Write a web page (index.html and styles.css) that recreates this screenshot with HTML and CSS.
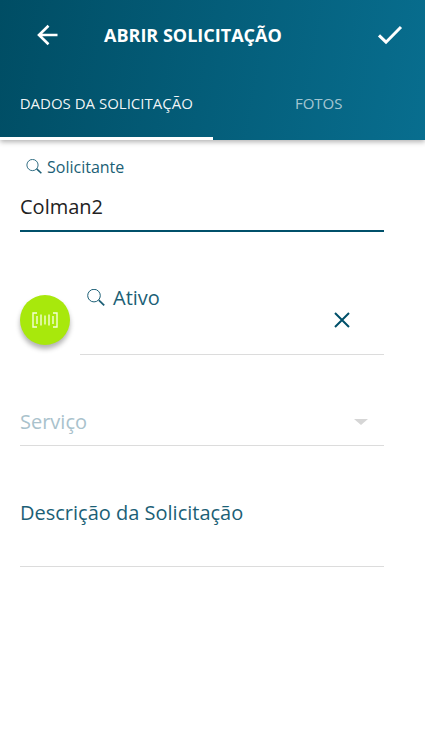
FILE: index.html
```html
<!DOCTYPE html>
<html lang="pt-BR">
<head>
<meta charset="utf-8">
<meta name="viewport" content="width=device-width, initial-scale=1">
<title>Abrir Solicitação</title>
<link rel="stylesheet" href="styles.css">
</head>
<body>
<header class="header">
  <div class="toolbar">
    <button class="icon-button" type="button" aria-label="Voltar">
      <svg width="22" height="22" viewBox="0 0 22 22" fill="none" stroke="currentColor" stroke-width="2.6"><path d="M21.5 11H3M12.5 1.8L3 11l9.5 9.2"/></svg>
    </button>
    <h1 class="title">ABRIR SOLICITAÇÃO</h1>
    <button class="icon-button" type="button" aria-label="Salvar">
      <svg width="26" height="20" viewBox="0 0 26 20" fill="none" stroke="currentColor" stroke-width="3"><path d="M2 10.4l7 6.8L24 2"/></svg>
    </button>
  </div>
  <nav class="tabs">
    <a class="tab tab-active" href="#dados">DADOS DA SOLICITAÇÃO</a>
    <a class="tab" href="#fotos">FOTOS</a>
  </nav>
</header>
<main id="dados">
  <form class="form">
    <div class="field field-focused">
      <label class="label label-small" for="solicitante">
        <svg width="16" height="16" viewBox="0 0 18 18" fill="none" stroke="currentColor"><circle cx="7.3" cy="6.8" r="6.3"/><path d="M12 11.2l5.3 4.8" stroke-width="1.8"/></svg>
        Solicitante
      </label>
      <input class="input" id="solicitante" type="text" value="Colman2">
    </div>
    <div class="asset-row">
      <button class="scan-button" type="button" aria-label="Ler código de barras">
        <svg width="26" height="16" viewBox="0 0 26 16" fill="none" stroke="currentColor" stroke-width="1.4"><path d="M5 1H1v14h4M21 1h4v14h-4M5 4v8M9 2.5v11M13 3.5v9M17 2.5v11M21 4v8"/></svg>
      </button>
      <div class="field asset-field">
        <label class="label asset-label" for="ativo">
          <svg width="18" height="18" viewBox="0 0 18 18" fill="none" stroke="currentColor"><circle cx="7" cy="6.6" r="6.3"/><path d="M11.8 11.2l5.4 5.2" stroke-width="1.8"/></svg>
          Ativo
        </label>
        <div class="asset-entry">
          <input class="input" id="ativo" type="text">
          <button class="clear-button" type="button" aria-label="Limpar">
            <svg width="16" height="16" viewBox="0 0 16 16" fill="none" stroke="currentColor" stroke-width="2"><path d="M1 1l14 14M15 1L1 15"/></svg>
          </button>
        </div>
      </div>
    </div>
    <div class="field service-field">
      <select class="input select" id="servico" aria-label="Serviço" disabled>
        <option>Serviço</option>
      </select>
      <svg class="caret" width="14" height="6" viewBox="0 0 14 6"><path d="M0 0h14L7 6z" fill="currentColor"/></svg>
    </div>
    <div class="field description-field">
      <label class="label" for="descricao">Descrição da Solicitação</label>
      <input class="input" id="descricao" type="text">
    </div>
  </form>
</main>
</body>
</html>
```
FILE: styles.css
```css
* {
  box-sizing: border-box;
}

body {
  margin: 0;
  background: #fff;
  color: #00506a;
  font-family: "Open Sans", "Noto Sans", sans-serif;
}

button,
input,
select {
  margin: 0;
  padding: 0;
  border: 0;
  background: none;
  color: inherit;
  font: inherit;
  outline: 0;
}

svg {
  display: block;
  flex: none;
}

.header {
  background: linear-gradient(100deg, #004d64, #086e8f);
  box-shadow: 0 2px 5px rgba(0, 0, 0, 0.3);
  color: #fff;
}

.toolbar {
  display: flex;
  align-items: center;
  height: 70px;
  padding: 0 10px 0 22px;
}

.icon-button {
  display: grid;
  place-items: center;
  width: 50px;
  height: 50px;
}

.title {
  flex: 1;
  margin: 0;
  padding-left: 32px;
  font-size: 18px;
  font-weight: 700;
  line-height: 24px;
  white-space: nowrap;
}

.tabs {
  display: grid;
  grid-template-columns: 1fr 1fr;
}

.tab {
  height: 70px;
  border-bottom: 3px solid transparent;
  color: rgba(255, 255, 255, 0.65);
  font-size: 15px;
  line-height: 67px;
  text-align: center;
  text-decoration: none;
  white-space: nowrap;
}

.tab-active {
  border-color: #fff;
  color: rgba(255, 255, 255, 0.95);
}

.form {
  padding: 16px 41px 0 20px;
}

.field {
  border-bottom: 1px solid #dcdcdc;
}

.field-focused {
  border-bottom: 2px solid #00506a;
}

.label {
  display: flex;
  align-items: center;
  gap: 8px;
  color: #1c5f76;
  font-size: 20px;
  line-height: 28px;
}

.label-small {
  gap: 5px;
  padding-left: 6px;
  font-size: 16px;
  line-height: 22px;
}

.input {
  display: block;
  width: 100%;
  min-width: 0;
  height: 32px;
  font-size: 20px;
}

.field-focused .input {
  height: 52px;
  padding-top: 4px;
  color: #222;
}

.asset-row {
  display: flex;
  align-items: center;
  gap: 10px;
  margin-top: 52px;
}

.scan-button {
  display: grid;
  flex: none;
  place-items: center;
  width: 50px;
  height: 50px;
  border-radius: 50%;
  background: #a8e80c;
  box-shadow: 0 4px 5px rgba(0, 0, 0, 0.3);
  color: #f4ffd8;
}

.asset-field {
  flex: 1;
}

.asset-label {
  height: 28px;
  padding-left: 7px;
}

.asset-entry {
  display: flex;
  height: 42px;
}

.clear-button {
  display: grid;
  flex: none;
  place-items: center;
  width: 32px;
  height: 32px;
  margin: -8px 26px 0 0;
}

.service-field {
  position: relative;
  margin-top: 44px;
}

.select {
  height: 46px;
  padding-bottom: 2px;
  appearance: none;
  color: #a9c2cc;
  opacity: 1;
}

.caret {
  position: absolute;
  top: 20px;
  right: 16px;
  color: #d6d6d6;
  pointer-events: none;
}

.description-field {
  margin-top: 53px;
}

.description-field .input {
  height: 39px;
}
```
